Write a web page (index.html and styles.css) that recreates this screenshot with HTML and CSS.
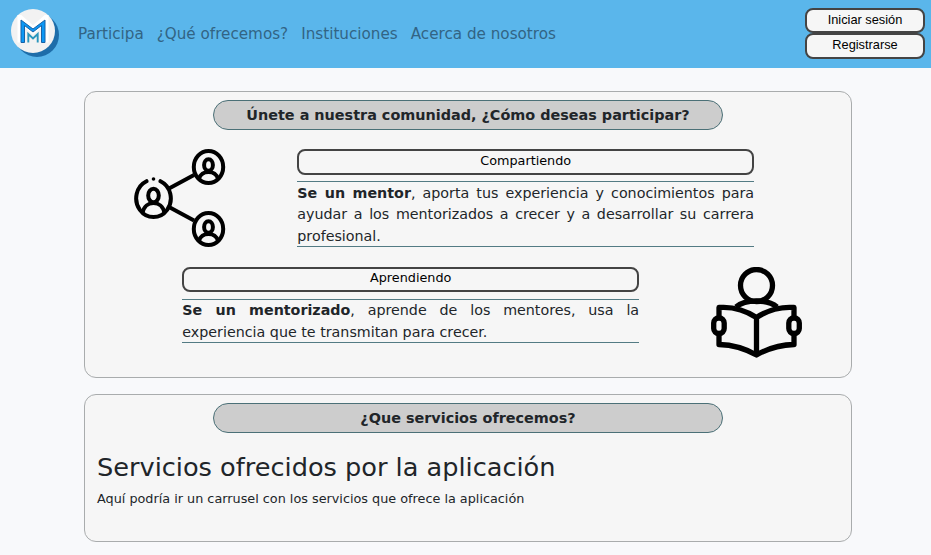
FILE: index.html
```html
<!DOCTYPE html>
<html lang="es">
<head>
<meta charset="utf-8">
<title>Mentorizados</title>
<link rel="stylesheet" href="styles.css">
</head>
<body>
<header class="navbar">
  <a class="logo" href="#">
    <svg width="32" height="32" viewBox="0 0 32 32">
      <path class="logo-halo" d="M4 27.500V4.500L16 15L28 4.500V27.500"/>
      <path class="logo-big" d="M4 27.500V5L16 14L28 5V27.500H24.500V10.500L16 17L7.500 10.500V27.500Z"/>
      <path class="logo-small" d="M11.300 27.500V19L16 23.500L20.700 19V27.500"/>
    </svg>
  </a>
  <nav class="links">
    <a href="#">Participa</a>
    <a href="#">¿Qué ofrecemos?</a>
    <a href="#">Instituciones</a>
    <a href="#">Acerca de nosotros</a>
  </nav>
  <div class="session">
    <button class="btn btn-login">Iniciar sesión</button>
    <button class="btn">Registrarse</button>
  </div>
</header>
<main>
  <section class="card card-join">
    <h2 class="pill">Únete a nuestra comunidad, ¿Cómo deseas participar?</h2>
    <div class="row row-share">
      <svg class="icon-share" width="92" height="98" viewBox="0 0 92 98" fill="none" stroke="#000" stroke-width="4">
        <path d="M35 39.500L60 26M35 58L60 71.500"/>
        <ellipse cx="74.500" cy="18" rx="14.700" ry="16"/>
        <ellipse cx="74.500" cy="80" rx="14.700" ry="16"/>
        <ellipse cx="74.500" cy="16" rx="4.400" ry="5.800"/>
        <ellipse cx="74.500" cy="78" rx="4.400" ry="5.800"/>
        <path d="M65 30C67 20.500 82 20.500 84 30M65 92C67 82.500 82 82.500 84 92"/>
        <path stroke-linecap="round" d="M12.500 32.200A17.300 18.700 0 1 0 26.500 32.200"/>
        <ellipse cx="19.500" cy="46.500" rx="5.300" ry="6.800"/>
        <path d="M8.500 64C11 50.500 28 50.500 30.500 64"/>
        <circle cx="19.500" cy="30" r="1.800" fill="#000" stroke="none"/>
      </svg>
      <div class="option">
        <button class="btn">Compartiendo</button>
        <p><b>Se un mentor</b>, aporta tus experiencia y conocimientos para ayudar a los mentorizados a crecer y a desarrollar su carrera profesional.</p>
      </div>
    </div>
    <div class="row row-learn">
      <div class="option">
        <button class="btn">Aprendiendo</button>
        <p><b>Se un mentorizado</b>, aprende de los mentores, usa la experiencia que te transmitan para crecer.</p>
      </div>
      <svg class="icon-read" width="92" height="92" viewBox="0 0 92 92" fill="none" stroke="#000" stroke-width="5.300" stroke-linejoin="round">
        <circle cx="45.500" cy="18.500" r="16"/>
        <path d="M25 40C34 32 57 32 66 40"/>
        <path d="M8 52V40.500Q28 39 45.500 50.500Q63 39 83 40.500V52M8 67V77.500Q28 78 45.500 88Q63 78 83 77.500V67M45.500 50V87"/>
        <rect x="2.700" y="51" width="10.500" height="15.500" rx="5"/>
        <rect x="77.800" y="51" width="10.500" height="15.500" rx="5"/>
      </svg>
    </div>
  </section>
  <section class="card card-services">
    <h2 class="pill">¿Que servicios ofrecemos?</h2>
    <h3>Servicios ofrecidos por la aplicación</h3>
    <p>Aquí podría ir un carrusel con los servicios que ofrece la aplicación</p>
  </section>
</main>
</body>
</html>
```
FILE: styles.css
```css
* { box-sizing: border-box; }
body {
  margin: 0;
  background: #f8f9fb;
  color: #212529;
  font: 12.800px/1.5 "DejaVu Sans", sans-serif;
  height: 555px;
  overflow: hidden;
}
h2, h3, p { margin: 0; }
.navbar {
  display: flex;
  align-items: center;
  height: 68px;
  padding: 0 6px 0 11px;
  background: #5ab6eb;
}
.logo {
  display: flex;
  align-items: center;
  justify-content: center;
  width: 44px;
  height: 44px;
  margin-bottom: 6px;
  border-radius: 50%;
  background: #f2f2f2;
  box-shadow: 4px 4px 0 #1e6da9;
}
.logo-halo { fill: none; stroke: #fff; stroke-width: 7; }
.logo-big { fill: #0b97f5; stroke: #1761a6; stroke-width: 1; }
.logo-small { fill: none; stroke: #2a96bd; stroke-width: 1.9; }
.links {
  display: flex;
  gap: 13px;
  margin-left: 23px;
  font-size: 15.200px;
}
.links a { color: #326484; text-decoration: none; }
.session {
  display: flex;
  flex-direction: column;
  width: 120px;
  margin: 0 0 1px auto;
}
.btn {
  display: block;
  width: 100%;
  height: 26px;
  padding: 0 0 3px;
  border: 2px solid #444;
  border-radius: 8px;
  background: #f6f6f6;
  color: #000;
  font: 12.800px/18px "DejaVu Sans", sans-serif;
}
.session .btn { font-family: "Liberation Sans", sans-serif; }
.session .btn-login { height: 25px; padding-bottom: 1px; }
.card {
  width: 768px;
  margin-left: 84px;
  padding: 8px 12px;
  border: 1px solid #a9acad;
  border-radius: 12px;
  background: #f6f6f6;
}
.card-join { height: 287px; margin-top: 23px; }
.card-services { height: 148px; margin-top: 16px; }
.pill {
  width: 510px;
  height: 30px;
  margin: 0 auto;
  border: 1px solid #4b7077;
  border-radius: 15px;
  background: #cdcdcd;
  font-size: 14.400px;
  line-height: 28px;
  text-align: center;
}
.row { display: flex; align-items: flex-start; }
.row-share { margin-top: 19px; padding-left: 36.500px; gap: 71.800px; }
.row-learn { margin-top: 20px; padding-left: 85.300px; gap: 71.700px; }
.row-learn .btn { height: 25px; }
.option { width: 456.800px; }
.option p {
  margin-top: 6px;
  padding-top: 0.500px;
  border: solid #537b84;
  border-width: 1px 0;
  font-size: 14.280px;
  line-height: 21.600px;
  text-align: justify;
}
.row-share p { height: 66px; }
.row-learn .option p { height: 44px; margin-top: 7px; padding-top: 0; }
.card-services h3 {
  margin-top: 19px;
  font-size: 25.600px;
  font-weight: 400;
  line-height: 31px;
}
.card-services p { margin-top: 6px; }
```
